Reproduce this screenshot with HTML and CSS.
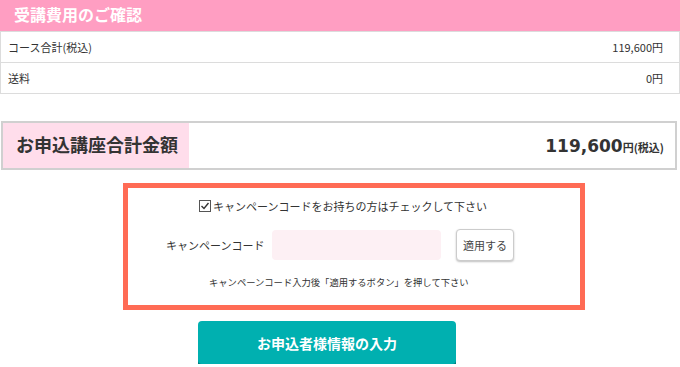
FILE: index.html
```html
<!DOCTYPE html>
<html lang="ja">
<head>
    <meta charset="UTF-8">
    <meta name="viewport" content="width=device-width, initial-scale=1.0">
    <title>受講費用のご確認</title>
    <link rel="stylesheet" href="styles.css">
</head>

<body>
    <h2 class="section-title">受講費用のご確認</h2>
    <table class="fee-table">
        <tr>
            <td>コース合計(税込)</td>
            <td class="price">119,600円</td>
        </tr>
        <tr>
            <td>送料</td>
            <td class="price">0円</td>
        </tr>
    </table>

    <div class="total-box">
        <div class="total-label">お申込講座合計金額</div>
        <div class="total-price">119,600<span class="tax">円(税込)</span></div>
    </div>

    <div class="campaign">
        <label class="check-row">
            <svg class="check" width="12" height="12" viewBox="0 0 12 12">
                <rect x="0.5" y="0.5" width="11" height="11" fill="#fff" stroke="#555"/>
                <path d="M2.5 6 L5 8.5 L9.5 3" fill="none" stroke="#333" stroke-width="1.4"/>
            </svg>
            キャンペーンコードをお持ちの方はチェックして下さい
        </label>
        <div class="code-row">
            <span class="code-label">キャンペーンコード</span>
            <input type="text" class="code-input">
            <button class="apply-btn">適用する</button>
        </div>
        <p class="note">キャンペーンコード入力後「適用するボタン」を押して下さい</p>
    </div>

    <button class="next-btn">お申込者様情報の入力</button>
</body>
</html>
```

FILE: styles.css
```css
/* General */
body {
    font-family: "DejaVu Sans", "Noto Sans CJK JP", sans-serif;
    color: #333;
    background-color: #fff;
    margin: 0;
    padding: 0;
    width: 680px;
}

/* Header */
.section-title {
    margin: 0;
    height: 31px;
    line-height: 29px;
    padding-left: 14px;
    background-color: #FF9EC2;  /* Pink */
    color: #fff;
    font-family: "Noto Sans CJK JP", sans-serif;
    font-size: 16px;
    font-weight: 700;
}

/* Fee table */
.fee-table {
    width: 680px;
    border-collapse: collapse;
    border-left: 1px solid #dcdcdc;
    border-right: 1px solid #dcdcdc;
    font-family: "Noto Sans CJK JP", sans-serif;
    font-size: 11px;
}

.fee-table td {
    height: 30px;
    padding: 0 7px;
    border-top: 1px solid #dcdcdc;
    border-bottom: 1px solid #dcdcdc;
}

.fee-table .price {
    text-align: right;
    padding-right: 16px;
}

/* Total */
.total-box {
    display: flex;
    align-items: center;
    margin: 27px 3px 0 1px;
    height: 45px;
    padding: 0;
    border: 2px solid #d0d0d0;
}

.total-label {
    width: 173px;
    height: 45px;
    line-height: 43px;
    padding-left: 13px;
    background-color: #FFDDEB;  /* Light pink */
    font-family: "Noto Sans CJK JP", sans-serif;
    font-size: 18px;
    font-weight: 700;
}

.total-price {
    margin-left: auto;
    padding-right: 11px;
    font-family: "DejaVu Sans", sans-serif;
    font-size: 17px;
    font-weight: 700;
}

.total-price .tax {
    font-family: "Noto Sans CJK JP", sans-serif;
    font-size: 11px;
}

/* Campaign code */
.campaign {
    width: 452px;
    margin: 13px 0 0 123px;
    border: 5px solid #FF6B55;  /* Orange */
}

.check-row {
    display: flex;
    align-items: center;
    gap: 2px;
    padding: 10px 0 0 71px;
    height: 16px;
    font-family: "Noto Sans CJK JP", sans-serif;
    font-size: 11px;
}

.code-row {
    display: flex;
    align-items: center;
    padding: 15px 0 0 38px;
}

.code-label {
    width: 106px;
    font-family: "Noto Sans CJK JP", sans-serif;
    font-size: 11px;
}

.code-input {
    width: 169px;
    height: 30px;
    margin: 0;
    padding: 0 6px;
    box-sizing: border-box;
    border: none;
    border-radius: 4px;
    background-color: #FDF0F4;  /* Pale pink */
}

.apply-btn {
    margin-left: 15px;
    width: 58px;
    height: 32px;
    padding: 0;
    border: 1px solid #ccc;
    border-radius: 4px;
    background-color: #fff;
    box-shadow: 0 1px 2px rgba(0, 0, 0, 0.25);
    color: #444;
    font-family: "Noto Sans CJK JP", sans-serif;
    font-size: 11px;
}

.note {
    margin: 0;
    padding: 14px 0 16px 81px;
    font-family: "Noto Sans CJK JP", sans-serif;
    font-size: 9.3px;
}

/* Next button */
.next-btn {
    display: block;
    margin: 11px 0 0 198px;
    width: 258px;
    height: 43px;
    border: none;
    border-radius: 4px;
    background-color: #00B0B0;  /* Teal */
    box-shadow: 0 3px 0 #007F7F;
    color: #fff;
    font-family: "Noto Sans CJK JP", sans-serif;
    font-size: 14px;
    font-weight: 700;
}
```
